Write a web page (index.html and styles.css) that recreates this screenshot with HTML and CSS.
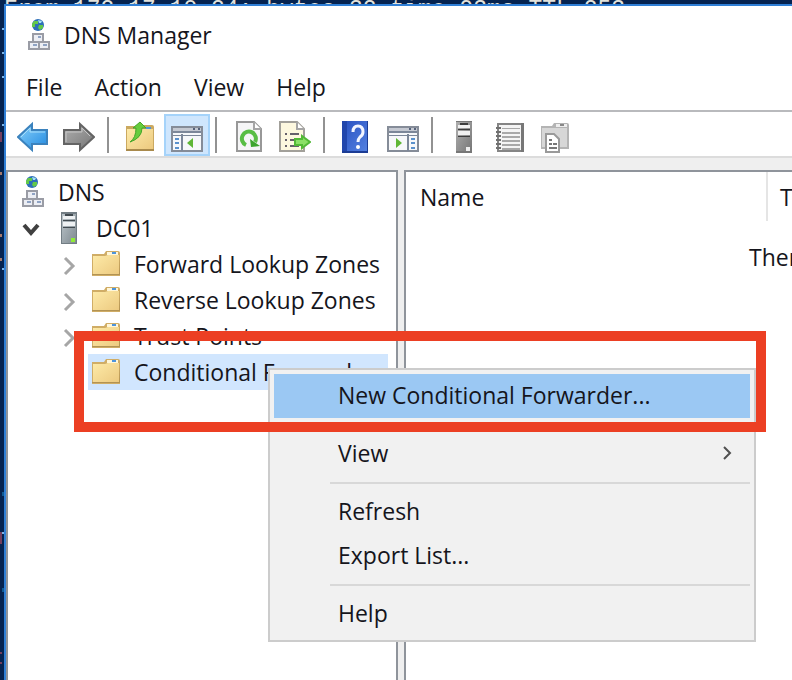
FILE: index.html
```html
<!DOCTYPE html>
<html lang="en">
<head>
<meta charset="utf-8">
<title>DNS Manager</title>
<link rel="stylesheet" href="styles.css">
</head>
<body>
<svg class="defs" aria-hidden="true">
  <defs>
    <linearGradient id="gold" x1="0" y1="0" x2="1" y2="1"><stop offset="0" stop-color="#fdeaa8"/><stop offset="1" stop-color="#ecc97f"/></linearGradient>
    <linearGradient id="blue" x1="0" y1="0" x2="1" y2="1"><stop offset="0" stop-color="#8ad2fb"/><stop offset="1" stop-color="#2089e0"/></linearGradient>
    <linearGradient id="grey" x1="0" y1="0" x2="1" y2="1"><stop offset="0" stop-color="#b0b0b0"/><stop offset="1" stop-color="#757575"/></linearGradient>
    <linearGradient id="steel" x1="0" y1="0" x2="1" y2="1"><stop offset="0" stop-color="#c0c9ce"/><stop offset="1" stop-color="#7c878e"/></linearGradient>
    <linearGradient id="navy" x1="0" y1="0" x2="1" y2="1"><stop offset="0" stop-color="#2850c0"/><stop offset="1" stop-color="#5583e2"/></linearGradient>
    <symbol id="dns" viewBox="0 0 32 32">
      <circle cx="16" cy="6" r="6" fill="#2d6fb8"/>
      <path d="M12 2h4v3h-3v3h-3V5zM17 6h4v3l-3 2-2-2z" fill="#63c948"/>
      <path d="M16 1l4 1-1 2h-2z" fill="#a6e3f5"/>
      <path d="M11 15h10v8H11zM7 23h10v7H7zM17 23h10v7H17z" fill="#eceef4" stroke="#9a9ca5" stroke-width="2"/>
      <path d="M16 17h3v2h-3zM11 25h4v2h-4zM21 25h4v2h-4z" fill="#8fa3c4"/>
    </symbol>
    <symbol id="folder" viewBox="0 0 32 32">
      <path d="M2 6h12l2-3h12q2 0 2 2v23H2z" fill="#d0ad66"/>
      <path d="M3 8h12l3-1h11v20H3z" fill="url(#gold)"/>
      <path d="M2 27h28V10l-1 16H2z" fill="#b29354"/>
      <path d="M17 4h11v3H17z" fill="#fff6d8"/>
      <path d="M22 4h4v2h-4z" fill="#4d94dc"/>
    </symbol>
    <symbol id="server" viewBox="0 0 32 32">
      <path d="M8 0h16v32H8z" fill="url(#steel)"/>
      <path d="M8 0h16v2H8zM8 0h1v32H8zM23 0h1v32h-1zM8 31h16v1H8z" fill="#727d84"/>
      <path d="M10 4h12v3H10zM10 10h12v4H10z" fill="#eef1f3"/>
      <path d="M12 2h8v2h-8zM10 8h12v1H10zM10 15h12v1H10z" fill="#414a50"/>
      <path d="M18 26h4v4h-4z" fill="#8fec36"/>
    </symbol>
    <symbol id="closed" viewBox="0 0 16 20"><path d="M3 2l8 8-8 8" fill="none" stroke="#a6a6a6" stroke-width="3"/></symbol>
  </defs>
</svg>

<div class="desktop">
  <pre class="console">From 172.17.10.24: bytes=32 time=93ms TTL=253</pre>
  <svg class="specks" viewBox="0 0 4 680" aria-hidden="true">
    <path d="M2 28h2v2h-2zM2 52h2v2h-2zM2 76h2v2h-2zM2 124h2v2h-2zM2 268h2v2h-2zM2 532h2v2h-2z" fill="#7bb4e8"/>
    <path d="M0 132h2v10h-2zM0 532h2v12h-2zM0 652h2v2h-2zM0 662h2v2h-2z" fill="#743f5e"/>
    <path d="M0 172h2v3h-2zM0 234h2v3h-2zM0 258h2v3h-2z" fill="#a67a6d"/>
    <path d="M2 492h2v4h-2zM2 588h2v4h-2z" fill="#105a93"/>
  </svg>
  <main class="window">
    <header class="titlebar"><svg class="icon"><use href="#dns"/></svg><h1>DNS Manager</h1></header>
    <nav class="menubar">
      <button>File</button><button>Action</button><button>View</button><button>Help</button>
    </nav>
    <div class="toolbar">
      <button aria-label="Back"><svg class="icon" viewBox="0 0 32 32"><path d="M1 16L15 3v6h15v14H15v6z" fill="url(#blue)" stroke="#3b82bd" stroke-width="2"/><path d="M4 16L13 7v4h15" fill="none" stroke="#a9def9" stroke-width="1"/></svg></button>
      <button aria-label="Forward"><svg class="icon" viewBox="0 0 32 32"><path d="M31 16L17 3v6H1v14h16v6z" fill="url(#grey)" stroke="#646464" stroke-width="2"/><path d="M3 21V11h16V7l8 8" fill="none" stroke="#c6c6c6" stroke-width="1"/></svg></button>
      <span class="rule"></span>
      <button aria-label="Up one level"><svg class="icon" viewBox="0 0 32 32"><path d="M1 5h9l2-1h15q2 0 2 2v24H1z" fill="#cba960"/><path d="M2 8h26v20H2z" fill="url(#gold)"/><path d="M1 28h28v2H1z" fill="#a98a4c"/><path d="M21 6h5v2h-5z" fill="#4d94dc"/><path d="M5 21q6-4 6-14H8l7-6 6 6h-4q0 10-12 14z" fill="#66cc3d" stroke="#43a528"/></svg></button>
      <button class="pressed" aria-label="Show console tree" aria-pressed="true"><svg class="icon" viewBox="0 0 32 32"><path d="M1 6h30v24H1z" fill="#f7f8fa" stroke="#858c98" stroke-width="2"/><path d="M2 7h28v3H2z" fill="#c5c9d2"/><path d="M2 10h28v2H2zM10 13h2v17h-2zM2 14h28v1H2z" fill="#7c8799"/><path d="M22 7h2v2h-2zM27 7h2v2h-2z" fill="#56627a"/><path d="M4 17h4v2H4zM4 21h4v2H4zM4 26h4v2H4z" fill="#5b91cc"/><path d="M22 17v10l-6-5z" fill="#5fb636"/></svg></button>
      <span class="rule"></span>
      <button aria-label="Refresh"><svg class="icon" viewBox="0 0 32 32"><path d="M4 1h17l7 7v22H4z" fill="#f5f5f6" stroke="#989898" stroke-width="2"/><path d="M21 1v7h7" fill="#fff" stroke="#a5a5a5" stroke-width="2"/><path d="M13 24a7 7 0 1 1 9-3" fill="none" stroke="#58bd44" stroke-width="4"/><path d="M17 18l10 7-9 1z" fill="#3da52e"/></svg></button>
      <button aria-label="Export list"><svg class="icon" viewBox="0 0 32 32"><path d="M1 1h17l7 7v22H1z" fill="#fdf8df" stroke="#a2a09a" stroke-width="2"/><path d="M18 1v7h7" fill="#fff" stroke="#a5a5a5" stroke-width="2"/><path d="M6 12h2v2H6zM6 18h2v2H6zM6 24h2v2H6zM11 12h9v2h-9zM11 18h7v2h-7zM11 24h9v2h-9z" fill="#66616b"/><path d="M16 18h7v-3l8 6-8 6v-3h-7z" fill="#8be066" stroke="#52b936" stroke-width="2"/></svg></button>
      <span class="rule"></span>
      <button aria-label="Help"><svg class="icon" viewBox="0 0 32 32"><path d="M1 0h26v32H1z" fill="url(#navy)"/><path d="M1 0h5v32H1z" fill="#2146ac"/><path d="M1 30h26v2H1zM26 0h1v32h-1z" fill="#1c3c94"/><path d="M12 11q0-6 5-6t5 6q0 3-3 5-2 2-2 5" fill="none" stroke="#f2f5ff" stroke-width="3"/><circle cx="17" cy="26" r="2" fill="#fff"/></svg></button>
      <button aria-label="Show action pane"><svg class="icon" viewBox="0 0 32 32"><path d="M1 6h30v24H1z" fill="#f7f8fa" stroke="#858c98" stroke-width="2"/><path d="M2 7h28v3H2z" fill="#c5c9d2"/><path d="M2 10h28v2H2zM20 13h2v17h-2zM2 14h28v1H2z" fill="#7c8799"/><path d="M22 7h2v2h-2zM27 7h2v2h-2z" fill="#56627a"/><path d="M24 17h4v2h-4zM24 21h4v2h-4zM24 26h4v2h-4z" fill="#5b91cc"/><path d="M9 17v10l6-5z" fill="#5fb636"/></svg></button>
      <span class="rule"></span>
      <button aria-label="New server"><svg class="icon" viewBox="0 0 32 32"><path d="M7 0h16v32H7z" fill="url(#grey)"/><path d="M7 0h16v1H7zM7 30h16v2H7z" fill="#777"/><path d="M9 4h12v3H9zM9 10h12v4H9z" fill="#f0f0f0"/><path d="M11 2h8v2h-8zM9 8h12v1H9zM9 15h12v1H9z" fill="#3c3c3c"/><path d="M17 26h4v4h-4z" fill="#eee"/></svg></button>
      <button aria-label="New record"><svg class="icon" viewBox="0 0 32 32"><path d="M3 3h25v27H3z" fill="#f4f4f4" stroke="#858585" stroke-width="2"/><path d="M26 2h3v29h-3z" fill="#777"/><path d="M7 7h18v1H7zM7 11h18v2H7zM7 15h18v2H7zM7 19h18v2H7zM7 23h18v2H7zM7 27h18v2H7z" fill="#a8a8a8"/><path d="M1 6h5v2H1zM1 10h5v2H1zM1 14h5v2H1zM1 18h5v2H1zM1 22h5v2H1zM1 26h5v2H1z" fill="#707070"/></svg></button>
      <button aria-label="Copy"><svg class="icon" viewBox="0 0 32 32"><path d="M0 5h11l2-3h13q2 0 2 2v24H0z" fill="#b4b4b4"/><path d="M1 7h25v19H1z" fill="#d7d7d7"/><path d="M15 3h11v3H15z" fill="#eee"/><path d="M19 3h4v2h-4z" fill="#888"/><path d="M5 13h8l5 5v13H5z" fill="#fff" stroke="#9a9a9a" stroke-width="2"/><path d="M8 18h3v2H8zM8 22h3v2H8zM12 22h4v2h-4zM8 26h8v2H8z" fill="#777"/></svg></button>
    </div>
    <div class="panes">
      <section class="pane tree-pane" aria-label="Console tree">
        <ul class="tree">
          <li class="root"><svg class="icon"><use href="#dns"/></svg><span>DNS</span></li>
          <li class="host"><svg class="twist" viewBox="0 0 20 20"><path d="M2 7l7 8 7-8" fill="none" stroke="#404040" stroke-width="4"/></svg><svg class="icon"><use href="#server"/></svg><span>DC01</span></li>
          <li class="zone"><svg class="chevron"><use href="#closed"/></svg><span class="label"><svg class="icon"><use href="#folder"/></svg>Forward Lookup Zones</span></li>
          <li class="zone"><svg class="chevron"><use href="#closed"/></svg><span class="label"><svg class="icon"><use href="#folder"/></svg>Reverse Lookup Zones</span></li>
          <li class="zone"><svg class="chevron"><use href="#closed"/></svg><span class="label"><svg class="icon"><use href="#folder"/></svg>Trust Points</span></li>
          <li class="zone"><span class="chevron"></span><span class="label selected"><svg class="icon"><use href="#folder"/></svg>Conditional Forwarders</span></li>
        </ul>
      </section>
      <section class="pane list-pane" aria-label="Items">
        <table>
          <thead><tr><th class="name">Name</th><th>Type</th></tr></thead>
          <tbody><tr><td colspan="2">There are no items to show in this view.</td></tr></tbody>
        </table>
      </section>
    </div>
  </main>
  <div class="context-menu" role="menu">
    <button role="menuitem" class="active">New Conditional Forwarder...</button>
    <hr>
    <button role="menuitem">View<svg class="submenu" viewBox="0 0 12 16"><path d="M2 2l6 6-6 6" fill="none" stroke="#505050" stroke-width="2"/></svg></button>
    <hr>
    <button role="menuitem">Refresh</button>
    <button role="menuitem">Export List...</button>
    <hr>
    <button role="menuitem">Help</button>
  </div>
  <div class="highlight"></div>
</div>
</body>
</html>
```

FILE: styles.css
```css
* { box-sizing: border-box; }

body {
  margin: 0;
  color: #15151c;
  font: 23px/34px "Open Sans", "Noto Sans", sans-serif;
}

button {
  padding: 0;
  border: 0;
  background: none;
  color: inherit;
  font: inherit;
}

.defs { position: absolute; width: 0; height: 0; }

.desktop {
  position: relative;
  display: flex;
  min-height: 100vh;
  padding: 4px 0 0 4px;
  overflow: hidden;
  background: #052350;
}

.console {
  position: absolute;
  top: -2px;
  left: 4px;
  margin: 0;
  color: #e2e2dc;
  font: 23px/24px "Liberation Mono", monospace;
}

.specks {
  position: absolute;
  top: 0;
  left: 0;
  width: 4px;
  height: 680px;
}

.window {
  position: relative;
  display: flex;
  flex: 1;
  flex-direction: column;
  min-width: 0;
  border: solid #2f7fd6;
  border-width: 2px 0 0 2px;
  background: #fff;
}

.icon { flex: none; width: 32px; height: 32px; }

.titlebar {
  display: flex;
  align-items: center;
  gap: 10px;
  height: 58px;
  padding-left: 16px;
}

h1 { margin: 0; font-size: 23px; font-weight: 400; }

.menubar {
  display: flex;
  align-items: center;
  gap: 32px;
  height: 46px;
  padding-left: 20px;
}

.toolbar {
  display: flex;
  align-items: center;
  height: 48px;
  padding: 2px 0 0 4px;
  border-top: 2px solid #b9babd;
  border-bottom: 2px solid #dcdcdc;
}

.toolbar button {
  display: grid;
  align-items: end;
  justify-items: center;
  width: 46px;
  height: 42px;
  padding-bottom: 3px;
}

.toolbar .pressed {
  padding-bottom: 1px;
  border: 2px solid #a5d3fa;
  background: #cfe6fd;
}

.rule { width: 2px; height: 36px; margin: 0 9px 0 5px; background: #929292; }

.panes {
  display: flex;
  flex: 1;
  gap: 6px;
  padding-top: 12px;
  background: #efefef;
}

.pane { border: 2px solid #8f949b; border-bottom: 0; background: #fff; }

.tree-pane { flex: none; width: 392px; }

.list-pane { flex: 1; min-width: 0; border-right: 0; overflow: hidden; }

.tree { margin: 0; padding: 2px 0; list-style: none; }

.tree li { display: flex; align-items: center; height: 36px; white-space: nowrap; }

.root { gap: 10px; padding-left: 8px; }

.host { gap: 11px; padding-left: 14px; }

.twist { width: 20px; height: 20px; }

.zone { gap: 10px; padding-left: 54px; }

.chevron { width: 16px; height: 20px; margin-top: 4px; }

.label { display: flex; align-items: center; gap: 12px; width: 300px; height: 36px; padding-left: 2px; }

.selected { background: #d1e6fe; }

table { width: 100%; border-collapse: collapse; white-space: nowrap; table-layout: fixed; }

thead { border-top: 2px solid #fff; }

th {
  height: 48px;
  padding: 0 0 2px 12px;
  text-align: left;
  font-weight: 400;
}

.name { width: 361px; padding-left: 14px; border-right: 2px solid #e5e5e5; }

td { padding: 19px 0 0 343px; }

.context-menu {
  position: absolute;
  top: 368px;
  left: 268px;
  width: 488px;
  padding: 4px;
  border: 2px solid #ccc;
  background: #f1f1f1;
}

.context-menu button {
  display: flex;
  align-items: center;
  justify-content: space-between;
  width: 100%;
  height: 44px;
  padding: 0 16px 2px 64px;
}

.context-menu .active { background: #9bc8f3; }

.context-menu hr { height: 2px; margin: 6px 0 6px 56px; border: 0; background: #d8d8d8; }

.submenu { width: 12px; height: 16px; }

.highlight {
  position: absolute;
  top: 331px;
  left: 74px;
  width: 692px;
  height: 101px;
  border: 10px solid #ec3f23;
}
```
